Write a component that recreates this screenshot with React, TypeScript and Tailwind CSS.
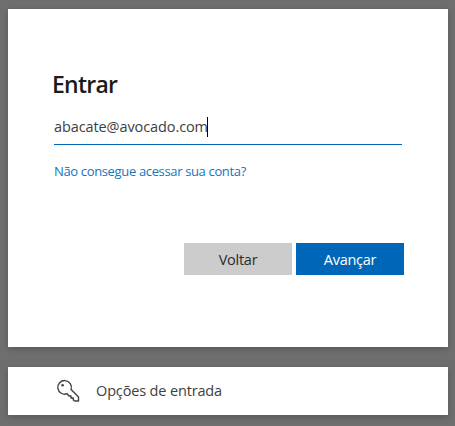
function KeyIcon() {
  return (
    <svg
      viewBox="0 0 24 24"
      className="size-6"
      fill="none"
      stroke="#404040"
      strokeWidth="1.4"
      strokeLinejoin="round"
      aria-hidden="true"
    >
      <path d="M15.1 10.4 22.5 18v4h-3.6l-1.6-1.1v-1.9H15v-2h-2l-1.9-2.3a6.8 6.8 0 1 1 4-4.3Z" />
      <circle cx="6.6" cy="6.2" r="1.3" fill="#404040" stroke="none" />
    </svg>
  );
}

export default function App() {
  return (
    <main className="flex h-[426px] w-[455px] flex-col gap-5 overflow-hidden bg-[#6e6e6e] pt-[9px] pl-2 font-['Open_Sans','Noto_Sans',sans-serif] text-[#1b1b1b]">
      <section className="h-[338px] w-[440px] bg-white px-11 pt-[59px] shadow-[0_2px_6px_rgba(0,0,0,0.2)]">
        <h1 className="text-[23px] leading-8 font-semibold tracking-[-0.75px]">Entrar</h1>
        <div className="mt-[9px] ml-0.5 flex h-9 w-[348px] items-center border-b border-[#0067b8]">
          <span className="w-[153px] text-[14.5px] tracking-[-0.1px] whitespace-nowrap text-[#404040]">abacate@avocado.com</span>
          <span className="h-5 w-px bg-black" />
        </div>
        <a href="#" className="mt-4 ml-0.5 block text-[13px] leading-5 tracking-[-0.35px] text-[#1674be]">
          Não consegue acessar sua conta?
        </a>
        <div className="mt-[62px] flex justify-end gap-1">
          <button className="h-8 w-[108px] bg-[#cccccc] pt-0.5 text-[14.5px] tracking-[-0.25px] text-[#2b2b2b]">Voltar</button>
          <button className="h-8 w-[108px] bg-[#0067b8] pt-0.5 text-[14.5px] font-medium tracking-[-0.25px] text-white">Avançar</button>
        </div>
      </section>
      <section className="flex h-12 w-[440px] items-center gap-4 bg-white pl-12 shadow-[0_2px_6px_rgba(0,0,0,0.2)]">
        <KeyIcon />
        <span className="text-[14.5px] tracking-[-0.15px] text-[#404040]">Opções de entrada</span>
      </section>
    </main>
  );
}
